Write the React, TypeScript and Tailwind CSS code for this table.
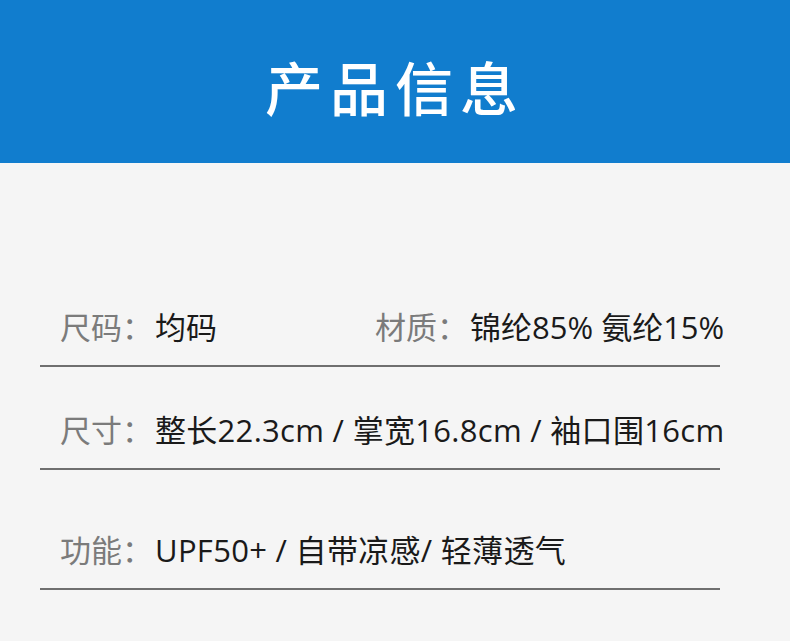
import React from "react";

const font = { fontFamily: '"Open Sans", "Noto Sans CJK SC", sans-serif' };

function Label({ children }: { children: React.ReactNode }) {
  return <span className="text-[#7b7b7b]">{children}</span>;
}

function Value({ children, wide }: { children: React.ReactNode; wide?: boolean }) {
  return (
    <span className={wide ? "ml-[2px] tracking-[0.3px] text-[#1a1a1a]" : "ml-[2px] text-[#1a1a1a]"}>
      {children}
    </span>
  );
}

function Line() {
  return <div className="ml-[40px] h-[2px] w-[680px] bg-[#6f6f6f]" />;
}

export default function App() {
  return (
    <div className="min-h-[641px] w-[790px] bg-[#f5f5f5]" style={font}>
      <div className="flex h-[163px] items-center justify-center bg-[#117dce] pt-[9px]">
        <h1
          className="text-[58px] font-medium leading-none tracking-[7px] text-white"
          style={{ fontFamily: '"Noto Sans CJK SC", sans-serif' }}
        >
          产品信息
        </h1>
      </div>

      <div className="pt-[144px]">
        <div className="flex pl-[60px] text-[31px] leading-[40px]">
          <div className="w-[315px] whitespace-nowrap">
            <Label>尺码：</Label>
            <Value>均码</Value>
          </div>
          <div className="whitespace-nowrap">
            <Label>材质：</Label>
            <Value>锦纶85% 氨纶15%</Value>
          </div>
        </div>
        <div className="mt-[18px]">
          <Line />
        </div>

        <div className="mt-[43px] flex pl-[60px] text-[31px] leading-[40px]">
          <div className="whitespace-nowrap">
            <Label>尺寸：</Label>
            <Value wide>整长22.3cm / 掌宽16.8cm / 袖口围16cm</Value>
          </div>
        </div>
        <div className="mt-[18px]">
          <Line />
        </div>

        <div className="mt-[60px] flex pl-[60px] text-[31px] leading-[40px]">
          <div className="whitespace-nowrap">
            <Label>功能：</Label>
            <Value wide>UPF50+ / 自带凉感/ 轻薄透气</Value>
          </div>
        </div>
        <div className="mt-[18px]">
          <Line />
        </div>
      </div>
    </div>
  );
}
